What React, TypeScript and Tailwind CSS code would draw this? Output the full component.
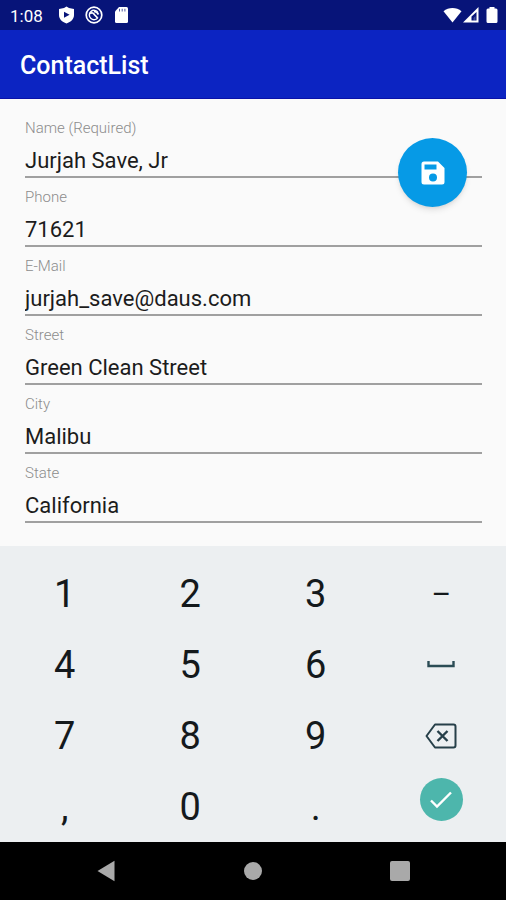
import React, { useState } from 'react';

interface Field {
  id: string;
  label: string;
  type: string;
  value: string;
}

const initialFields: Field[] = [
  { id: 'name', label: 'Name (Required)', type: 'text', value: 'Jurjah Save, Jr' },
  { id: 'phone', label: 'Phone', type: 'tel', value: '71621' },
  { id: 'email', label: 'E-Mail', type: 'text', value: 'jurjah_save@daus.com' },
  { id: 'street', label: 'Street', type: 'text', value: 'Green Clean Street' },
  { id: 'city', label: 'City', type: 'text', value: 'Malibu' },
  { id: 'state', label: 'State', type: 'text', value: 'California' },
];

const keys = ['1', '2', '3', '–', '4', '5', '6', 'space', '7', '8', '9', 'delete', ',', '0', '.', 'done'];

const StatusBar: React.FC = () => (
  <div className="flex h-[30px] items-center justify-between bg-[#071479] pl-[10px] pr-2 text-white">
    <div className="flex items-center gap-3">
      <span className="w-9 pt-[2px] text-[17px] leading-5">1:08</span>
      <div className="flex items-center gap-[10px]">
        {/* Play Protect */}
        <svg width="17" height="18" viewBox="0 0 17 18">
          <path d="M8.500.5 11 2l5 1v6c0 4-3 7-7.500 8.500C4 16 1 13 1 9V3l5-1z" fill="currentColor" />
          <path d="M6 5.800v6l5.600-3z" fill="#071479" />
        </svg>
        <svg width="18" height="18" viewBox="0 0 18 18" fill="none" stroke="currentColor">
          <circle cx="9" cy="9" r="7.800" strokeWidth="1.700" />
          <path d="M13 6.500A4.700 4.700 0 1 0 13 11.500" strokeWidth="1.400" />
          <path d="M5 7.500c2-1.300 3.500-.3 4.500 1.300l3 3M9 5.500c2 0 3.500 1 4.500 3" strokeWidth="1.700" />
        </svg>
        {/* SD card */}
        <svg width="16" height="18" viewBox="0 0 16 18">
          <path d="M6 1h7.500Q15 1 15 2.500v13q0 1.500-1.500 1.500h-10Q2 17 2 15.500V5.500z" fill="currentColor" />
          <path d="M6.500 2.800v2.700M9.200 2.800v2.700M11.900 2.800v2.700" stroke="#071479" strokeWidth="1" opacity=".7" />
        </svg>
      </div>
    </div>
    <div className="flex items-center">
      <svg width="19" height="18" viewBox="0 0 19 18">
        <path d="M0.500 5.200C5.500.8 13.500.8 18.500 5.200L9.500 16.500z" fill="currentColor" />
      </svg>
      <svg width="18" height="18" viewBox="0 0 18 18">
        <path d="M1 16.500 16.500 1v15.500z" fill="currentColor" />
        <path d="M9.500 14.500V10.500L14.500 6v8.500z" fill="#071479" />
        <path d="M11.500 14.500V12l2-2v4.500z" fill="currentColor" opacity=".25" />
      </svg>
      <svg className="ml-[6px]" width="12" height="18" viewBox="0 0 12 18">
        <path d="M3.500 1h5v1.500H10q1.500 0 1.500 1.500v11.500q0 1.500-1.500 1.500H2Q.5 17 .5 15.500V4Q.5 2.500 2 2.500h1.500z" fill="currentColor" />
      </svg>
    </div>
  </div>
);

const KeyLabel: React.FC<{ name: string }> = ({ name }) => {
  if (name === 'space') {
    return (
      <svg width="30" height="10" viewBox="0 0 30 10" fill="none">
        <path d="M2.500 1v5h25V1" stroke="#2b4c55" strokeWidth="2.400" />
      </svg>
    );
  }
  if (name === 'delete') {
    return (
      <svg width="32" height="26" viewBox="0 0 32 26" fill="none" stroke="#263f49" strokeWidth="2">
        <path d="M10 1.500h18.500q2 0 2 2v19q0 2-2 2H10L1.500 13z" strokeLinejoin="round" />
        <path d="m12.500 8 10 10M22.500 8l-10 10" strokeWidth="2.400" />
      </svg>
    );
  }
  if (name === 'done') {
    return (
      <span className="mb-[14px] flex size-[43px] items-center justify-center rounded-full bg-[#4db6ac]">
        <svg width="24" height="20" viewBox="0 0 24 20" fill="none">
          <path d="m2 10.500 6 6L22 2.500" stroke="white" strokeWidth="2.400" />
        </svg>
      </span>
    );
  }
  return <span className={name === '–' ? 'text-[30px]' : 'pt-[2px]'}>{name}</span>;
};

const App: React.FC = () => {
  const [fields, setFields] = useState(initialFields);

  const updateField = (id: string, value: string) => {
    setFields(fields.map(field => (field.id === id ? { ...field, value } : field)));
  };

  return (
    <div className="flex min-h-screen flex-col bg-[#fafafa] font-[Roboto,sans-serif]">
      <StatusBar />
      <header className="flex h-[69px] items-center border-b border-[#0a12a8] bg-[#0c24c2] px-5 pt-1">
        <h1 className="text-[25px] leading-8 font-medium text-white">ContactList</h1>
      </header>

      <form className="relative flex flex-1 flex-col gap-[9px] pt-[19px] pr-6 pb-[23px] pl-[25px]">
        {fields.map(field => (
          <div key={field.id} className="flex flex-col">
            <label htmlFor={field.id} className="text-[15px] leading-5 font-light text-[#8c8c8c]">
              {field.label}
            </label>
            <input
              id={field.id}
              type={field.type}
              value={field.value}
              onChange={e => updateField(field.id, e.target.value)}
              className="h-10 w-full border-b-2 border-[#a0a0a0] pt-[6px] text-[22px] text-[#1c1c1c] outline-none"
            />
          </div>
        ))}
        <button
          type="button"
          aria-label="Save contact"
          className="absolute top-[39px] right-[39px] flex size-[69px] items-center justify-center rounded-full bg-[#069ae6] shadow-md"
        >
          <svg width="24" height="24" viewBox="0 0 24 24">
            <path
              d="M17 .5H3Q.5.5.5 3v18q0 2.500 2.500 2.500h18q2.500 0 2.500-2.500V7zM12 20.500a4 4 0 1 1 0-8 4 4 0 0 1 0 8zM15.500 8.500h-12v-5h12z"
              fill="white"
              fillRule="evenodd"
            />
          </svg>
        </button>
      </form>

      <div className="grid grid-cols-4 bg-[#eceff1] px-[2px] pt-3">
        {keys.map(key => (
          <button
            key={key}
            type="button"
            aria-label={key}
            className="flex h-[71px] items-center justify-center text-[38px] text-[#14191c]"
          >
            <KeyLabel name={key} />
          </button>
        ))}
      </div>

      <nav className="grid h-[58px] grid-cols-3 bg-black px-8 text-[#a9a9a9]">
        <button type="button" aria-label="Back" className="flex items-center justify-center">
          <svg width="18" height="22" viewBox="0 0 18 22">
            <path d="M17.500.8v20.400L.5 11z" fill="currentColor" />
          </svg>
        </button>
        <button type="button" aria-label="Home" className="flex items-center justify-center">
          <span className="size-[18px] rounded-full bg-current" />
        </button>
        <button type="button" aria-label="Recent apps" className="flex items-center justify-center">
          <span className="size-5 rounded-xs bg-current" />
        </button>
      </nav>
    </div>
  );
};

export default App;
